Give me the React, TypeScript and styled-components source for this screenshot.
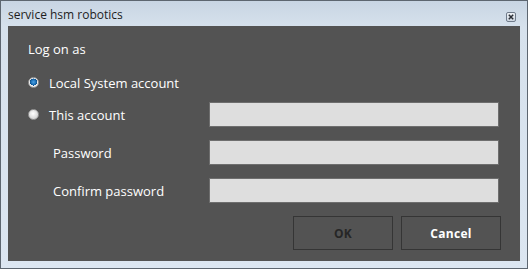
import React from 'react';
import styled, { createGlobalStyle } from 'styled-components';

const GlobalStyle = createGlobalStyle`
  html, body {
    margin: 0;
    padding: 0;
    background: #ffffff;
  }
  * {
    box-sizing: border-box;
  }
`;

const Window = styled.div`
  width: 528px;
  height: 269px;
  display: flex;
  flex-direction: column;
  border: 1px solid #5d6670;
  background: linear-gradient(180deg, #c8d5e3 0px, #d6e1ec 26px, #dce6f1 100%);
  font-family: 'Open Sans', 'Noto Sans', sans-serif;
`;

const TitleBar = styled.div`
  height: 25px;
  display: flex;
  align-items: center;
  justify-content: space-between;
  padding: 0 11px 0 7px;
`;

const Title = styled.span`
  font-size: 12px;
  color: #1e1e1e;
  margin-top: 1px;
`;

const CloseButton = styled.button`
  width: 10px;
  height: 10px;
  padding: 0;
  margin-top: 6px;
  display: flex;
  align-items: center;
  justify-content: center;
  border: 1px solid #6f7b8a;
  border-radius: 2px;
  background: linear-gradient(180deg, #eef2f6, #cdd6e0);
`;

const Frame = styled.div`
  flex: 1;
  display: flex;
  padding: 0 7px 7px 7px;
`;

const Panel = styled.div`
  flex: 1;
  background: #535353;
  padding: 13px 21px 0 20px;
  display: flex;
  flex-direction: column;
  color: #ffffff;
  font-size: 13px;
`;

const Heading = styled.h2`
  margin: 0 0 11px 0;
  height: 20px;
  line-height: 20px;
  font-size: 13px;
  font-weight: 400;
`;

const Row = styled.div<{ indent?: boolean; tight?: boolean }>`
  height: 25px;
  display: flex;
  align-items: center;
  margin-bottom: ${({ tight }) => (tight ? '7px' : '13px')};
  padding-left: ${({ indent }) => (indent ? '25px' : '0')};
`;

const RowLabel = styled.label`
  flex: 1;
  display: flex;
  align-items: center;
  gap: 10px;
`;

const Radio = styled.span<{ checked?: boolean }>`
  width: 11px;
  height: 11px;
  border-radius: 50%;
  flex: none;
  border: 1px solid #9a9a9a;
  background: ${({ checked }) =>
    checked
      ? 'radial-gradient(circle at 50% 45%, #4fa3e6 0, #1a6fb5 2.5px, #0d4f8a 3.5px, #f4f4f4 3.6px, #d8d8d8 100%)'
      : 'radial-gradient(circle at 45% 40%, #ffffff 0, #e6e6e6 3px, #c4c4c4 100%)'};
`;

const Field = styled.input`
  width: 290px;
  height: 25px;
  flex: none;
  border: 1px solid #6e6e6e;
  background: #dedede;
  outline: none;
`;

const Buttons = styled.div`
  display: flex;
  justify-content: flex-end;
  gap: 8px;
  margin-right: -2px;
`;

const DialogButton = styled.button<{ disabled?: boolean }>`
  width: 100px;
  height: 34px;
  border: 1px solid #353535;
  background: #535353;
  color: ${({ disabled }) => (disabled ? '#262626' : '#ffffff')};
  font-family: 'Open Sans', 'Noto Sans', sans-serif;
  font-weight: 700;
  font-size: 12px;
  letter-spacing: 0.3px;
  padding: 0;
`;

const App: React.FC = () => {
  return (
    <>
      <GlobalStyle />
      <Window>
        <TitleBar>
          <Title>service hsm robotics</Title>
          <CloseButton aria-label="Close">
            <svg width="6" height="6" viewBox="0 0 6 6">
              <path d="M0.8 0.8 L5.2 5.2 M5.2 0.8 L0.8 5.2" stroke="#2b2f36" strokeWidth="1.5" />
            </svg>
          </CloseButton>
        </TitleBar>
        <Frame>
          <Panel>
            <Heading>Log on as</Heading>
            <Row tight>
              <RowLabel>
                <Radio checked />
                Local System account
              </RowLabel>
            </Row>
            <Row>
              <RowLabel>
                <Radio />
                This account
              </RowLabel>
              <Field />
            </Row>
            <Row indent>
              <RowLabel>Password</RowLabel>
              <Field type="password" />
            </Row>
            <Row indent>
              <RowLabel>Confirm password</RowLabel>
              <Field type="password" />
            </Row>
            <Buttons>
              <DialogButton disabled>OK</DialogButton>
              <DialogButton>Cancel</DialogButton>
            </Buttons>
          </Panel>
        </Frame>
      </Window>
    </>
  );
};

export default App;
